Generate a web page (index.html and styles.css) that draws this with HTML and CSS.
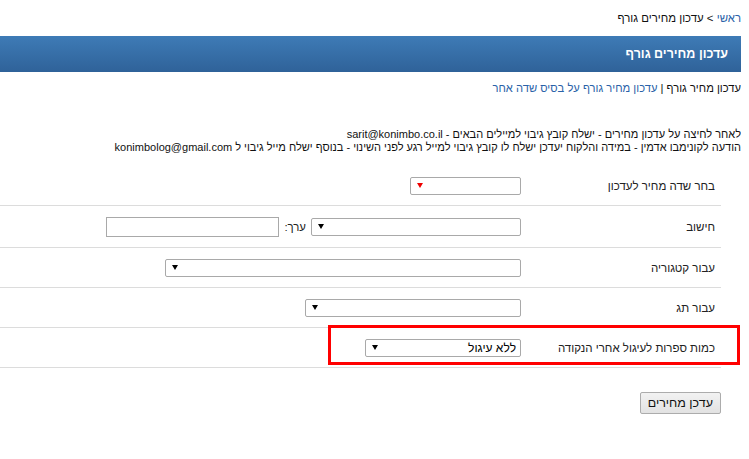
FILE: index.html
```html
<!DOCTYPE html>
<html lang="he" dir="rtl">
<head>
<meta charset="utf-8">
<title>עדכון מחירים גורף</title>
<link rel="stylesheet" href="styles.css">
</head>
<body>
<div class="breadcrumb"><a href="#" class="link">ראשי</a> &gt; עדכון מחירים גורף</div>
<h1 class="title-bar">עדכון מחירים גורף</h1>
<div class="subnav">עדכון מחיר גורף | <a href="#" class="link">עדכון מחיר גורף על בסיס שדה אחר</a></div>
<p class="notice">לאחר לחיצה על עדכון מחירים - ישלח קובץ גיבוי למיילים הבאים - sarit@konimbo.co.il<br>הודעה לקונימבו אדמין - במידה והלקוח יעדכן ישלח לו קובץ גיבוי למייל רגע לפני השינוי - בנוסף ישלח מייל גיבוי ל konimbolog@gmail.com</p>
<div class="form">
  <div class="row row-first">
    <div class="label">בחר שדה מחיר לעדכון</div>
    <div class="field">
      <div class="select w-111"><span class="arrow arrow-red"></span></div>
    </div>
  </div>
  <div class="row row-tall">
    <div class="label">חישוב</div>
    <div class="field">
      <div class="select w-210"><span class="arrow"></span></div>
      <span class="inline-label">ערך:</span>
      <div class="textbox"></div>
    </div>
  </div>
  <div class="row">
    <div class="label">עבור קטגוריה</div>
    <div class="field">
      <div class="select w-356"><span class="arrow"></span></div>
    </div>
  </div>
  <div class="row">
    <div class="label">עבור תג</div>
    <div class="field">
      <div class="select w-216"><span class="arrow"></span></div>
    </div>
  </div>
  <div class="row row-marked">
    <div class="label">כמות ספרות לעיגול אחרי הנקודה</div>
    <div class="field">
      <div class="select w-156"><span class="value">ללא עיגול</span><span class="arrow"></span></div>
    </div>
    <div class="highlight"></div>
  </div>
</div>
<div class="actions"><button class="btn" type="button">עדכן מחירים</button></div>
</body>
</html>
```
FILE: styles.css
```css
html, body {
  background: #fff;
}
body {
  margin: 0 8px 0 0;
  direction: rtl;
  font-family: "Liberation Sans", "DejaVu Sans", Arial, sans-serif;
  font-size: 11.4px;
  color: #111;
}
.link {
  color: #2a62a8;
  text-decoration: none;
}
.breadcrumb {
  padding-top: 11px;
  height: 14px;
  line-height: 14px;
  margin-bottom: 11px;
}
.title-bar {
  margin: 0;
  height: 36px;
  line-height: 36px;
  padding-right: 13px;
  font-size: 12.5px;
  font-weight: bold;
  color: #fff;
  background: linear-gradient(to bottom, #3e7bb6 0%, #2f6299 100%);
}
.subnav {
  margin-top: 9px;
  line-height: 14px;
  font-size: 11.2px;
}
.notice {
  margin: 33px 0 0 0;
  line-height: 13px;
  font-size: 11px;
}
.form {
  width: 721px;
  margin-top: 12px;
  margin-right: 20px;
}
.row {
  display: flex;
  align-items: center;
  height: 39px;
  border-bottom: 1px solid #dcdcdc;
  position: relative;
}
.row-tall {
  height: 41px;
}
.label {
  width: 194px;
  padding-right: 6px;
  color: #222;
  font-size: 11.5px;
}
.field {
  flex: 1;
  display: flex;
  align-items: center;
  gap: 5px;
}
.select {
  height: 16px;
  border: 1px solid #a9a9a9;
  border-radius: 2px;
  background: #fff;
  display: flex;
  align-items: center;
  justify-content: space-between;
  padding: 0 4px 0 6px;
  box-sizing: content-box;
}
.select .arrow {
  margin-right: auto;
}
.w-111 { width: 99px; }
.w-210 { width: 198px; }
.w-356 { width: 344px; }
.w-216 { width: 204px; }
.w-156 { width: 144px; }
.arrow {
  width: 0;
  height: 0;
  border-left: 3px solid transparent;
  border-right: 3px solid transparent;
  border-top: 5px solid #000;
}
.arrow-red {
  border-top-color: #e00;
}
.value {
  font-size: 12px;
  color: #000;
}
.inline-label {
  color: #222;
}
.textbox {
  width: 171px;
  height: 18px;
  border: 1px solid #a9a9a9;
  background: #fff;
}
.highlight {
  position: absolute;
  left: 328px;
  right: -19px;
  top: -3px;
  bottom: 2px;
  border: 3px solid #f00;
  pointer-events: none;
}
.actions {
  width: 721px;
  margin-right: 20px;
  margin-top: 24px;
  display: flex;
}
.btn {
  font-family: inherit;
  font-size: 12.5px;
  height: 22px;
  padding: 0 7px;
  border: 1px solid #acacac;
  border-radius: 2px;
  background: linear-gradient(to bottom, #f2f2f2, #e2e2e2);
  color: #111;
}
```
